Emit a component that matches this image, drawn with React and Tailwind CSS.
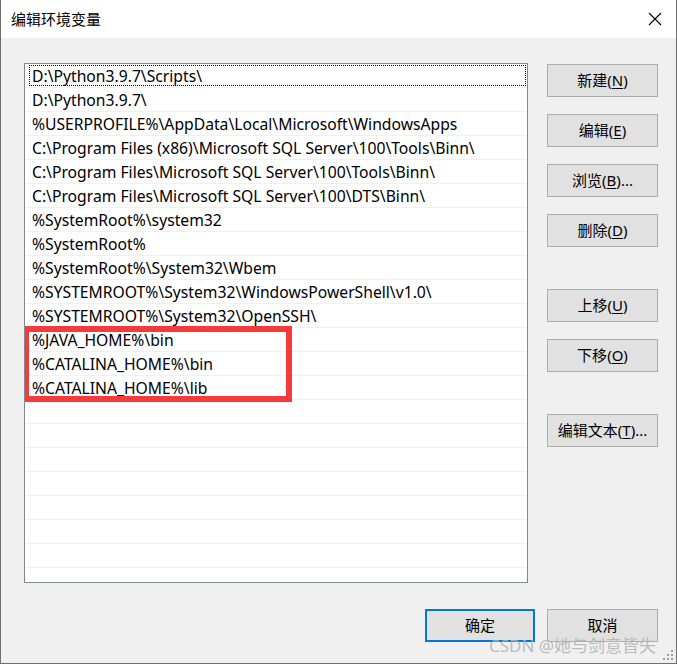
import React from 'react';

const paths = [
  'D:\\Python3.9.7\\Scripts\\',
  'D:\\Python3.9.7\\',
  '%USERPROFILE%\\AppData\\Local\\Microsoft\\WindowsApps',
  'C:\\Program Files (x86)\\Microsoft SQL Server\\100\\Tools\\Binn\\',
  'C:\\Program Files\\Microsoft SQL Server\\100\\Tools\\Binn\\',
  'C:\\Program Files\\Microsoft SQL Server\\100\\DTS\\Binn\\',
  '%SystemRoot%\\system32',
  '%SystemRoot%',
  '%SystemRoot%\\System32\\Wbem',
  '%SYSTEMROOT%\\System32\\WindowsPowerShell\\v1.0\\',
  '%SYSTEMROOT%\\System32\\OpenSSH\\',
];

const highlighted = ['%JAVA_HOME%\\bin', '%CATALINA_HOME%\\bin', '%CATALINA_HOME%\\lib'];

const font = { fontFamily: '"Noto Sans", "Noto Sans CJK SC", sans-serif' };

const Row = ({ text, focused }) => (
  <div className="h-[24px] border-b border-[#f0f0f0] flex items-center pl-[7px] pr-[2px] pt-[3px] relative">
    {focused && (
      <div className="absolute left-[4px] right-[1px] top-[1px] bottom-[1px] border border-dotted border-black" />
    )}
    <span className="text-[15.7px] text-black whitespace-nowrap leading-none">{text}</span>
  </div>
);

const Btn = ({ label, hot, after = '', primary }) => (
  <button
    type="button"
    className={
      'h-[33px] w-[111px] bg-[#e1e1e1] text-[15px] text-black flex items-center justify-center leading-none ' +
      (primary ? 'border-2 border-[#0078d7] w-[110px]' : 'border border-[#adadad]')
    }
  >
    <span>
      {label}(<span className="underline underline-offset-2">{hot}</span>){after}
    </span>
  </button>
);

const PlainBtn = ({ label, primary }) => (
  <button
    type="button"
    className={
      'h-[33px] bg-[#e1e1e1] text-[15px] text-black flex items-center justify-center leading-none ' +
      (primary ? 'border-2 border-[#0078d7] w-[110px]' : 'border border-[#adadad] w-[111px]')
    }
  >
    {label}
  </button>
);

export default function App() {
  const emptyRows = Array.from({ length: 9 });
  return (
    <div
      className="w-[677px] h-[664px] bg-[#f0f0f0] border-l border-r border-b border-[#6f6f6f] flex flex-col relative overflow-hidden"
      style={font}
    >
      {/* Title bar */}
      <div className="h-[38px] bg-white flex items-center justify-between pl-[10px] pr-[14px] shrink-0">
        <span className="text-[15px] text-black">编辑环境变量</span>
        <svg width="14" height="14" viewBox="0 0 14 14">
          <path d="M1 1 L13 13 M13 1 L1 13" stroke="#000" strokeWidth="1.1" fill="none" />
        </svg>
      </div>

      {/* Body */}
      <div className="flex pl-[23px] pt-[25px] gap-[19px]">
        <div className="w-[504px] h-[520px] bg-white border border-[#828790] overflow-hidden relative">
          {paths.map((p, i) => (
            <Row key={i} text={p} focused={i === 0} />
          ))}
          {highlighted.map((p, i) => (
            <Row key={'h' + i} text={p} />
          ))}
          {emptyRows.map((_, i) => (
            <Row key={'e' + i} text="" />
          ))}
          {/* red annotation box */}
          <div className="absolute left-[-2px] top-[262px] w-[269px] h-[76px] border-[6px] border-[#f43a3a]" />
        </div>

        <div className="flex flex-col pt-[1px]">
          <div className="flex flex-col gap-[17px]">
            <Btn label="新建" hot="N" />
            <Btn label="编辑" hot="E" />
            <Btn label="浏览" hot="B" after="..." />
            <Btn label="删除" hot="D" />
          </div>
          <div className="flex flex-col gap-[17px] mt-[42px]">
            <Btn label="上移" hot="U" />
            <Btn label="下移" hot="O" />
          </div>
          <div className="mt-[42px]">
            <Btn label="编辑文本" hot="T" after="..." />
          </div>
        </div>
      </div>

      {/* Footer buttons */}
      <div className="flex justify-end gap-[12px] pr-[18px] mt-[26px]">
        <PlainBtn label="确定" primary />
        <PlainBtn label="取消" />
      </div>

      {/* Watermark */}
      <div className="absolute left-[488px] top-[637px] text-[17px] text-[#b4b4b4]/90 whitespace-nowrap leading-none">
        CSDN @她与剑意皆失
      </div>

      {/* Size grip */}
      <svg className="absolute right-[2px] bottom-[2px]" width="11" height="11" viewBox="0 0 11 11">
        {[
          [8, 0],
          [4, 4],
          [8, 4],
          [0, 8],
          [4, 8],
          [8, 8],
        ].map(([x, y], i) => (
          <rect key={i} x={x} y={y} width="2" height="2" fill="#a0a0a0" />
        ))}
      </svg>
    </div>
  );
}
